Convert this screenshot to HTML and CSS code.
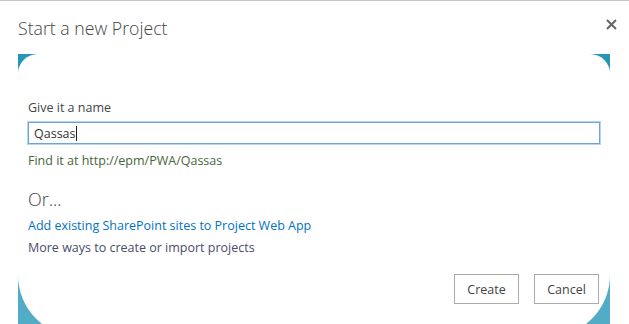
FILE: index.html
```html
<!DOCTYPE html>
<html lang="en">
<head>
    <meta charset="UTF-8">
    <meta name="viewport" content="width=device-width, initial-scale=1.0">
    <title>Start a new Project</title>
    <link rel="stylesheet" href="styles.css">
</head>
<body>
    <div class="dialog">
        <div class="dialog-header">
            <h1 class="dialog-title">Start a new Project</h1>
            <button class="close-button" title="Close">
                <svg width="11" height="11" viewBox="0 0 11 11">
                    <path d="M1 1 L10 10 M10 1 L1 10" stroke="#666" stroke-width="2" fill="none"/>
                </svg>
            </button>
        </div>

        <div class="frame">
            <div class="card">
                <label class="field-label" for="project_name">Give it a name</label>
                <div class="name-box">
                    <span class="name-text">Qassas</span><span class="caret"></span>
                </div>
                <div class="url-hint">Find it at http://epm/PWA/Qassas</div>

                <div class="or-heading">Or...</div>
                <a class="link" href="#">Add existing SharePoint sites to Project Web App</a>
                <a class="link link-more" href="#">More ways to create or import projects</a>

                <div class="buttons">
                    <button class="dialog-button">Create</button>
                    <button class="dialog-button">Cancel</button>
                </div>
            </div>
        </div>
    </div>
</body>
</html>
```
FILE: styles.css
```css
html, body {
    margin: 0;
    background: #fff;
}
body {
    height: 324px;
    box-sizing: border-box;
    overflow: hidden;
    font-family: "Open Sans", Arial, sans-serif;
    color: #444;
    border-top: 1px solid #c6c6c6;
}
.dialog-header {
    display: flex;
    justify-content: space-between;
    align-items: flex-start;
    padding: 0 12px 0 18px;
    height: 53px;
}
.dialog-title {
    margin: 15px 0 0 0;
    font-size: 17.7px;
    font-weight: 300;
    color: #444;
    line-height: 24px;
}
.close-button {
    margin-top: 17px;
    padding: 0;
    border: none;
    background: none;
    width: 11px;
    height: 11px;
    cursor: pointer;
}
/* teal frame that shows through the card's rounded corners */
.frame {
    margin: 0 19px 0 18px;
    height: 270px;
    overflow: hidden;
    background: linear-gradient(to bottom, #2596b8 0, #2596b8 12px, #fff 22px, #fff 214px, #52acc6 223px, #52acc6 100%);
}
.card {
    height: 283px;
    box-sizing: border-box;
    background: #fff;
    border-radius: 20px 20px 62px 62px;
    padding: 45px 10px 0 10px;
    display: flex;
    flex-direction: column;
    font-size: 12.5px;
}
.field-label {
    line-height: 18px;
}
.name-box {
    margin-top: 5px;
    height: 22px;
    box-sizing: border-box;
    border: 1px solid #6ea5d8;
    box-shadow: 0 0 0 1px #b9d4ee;
    padding: 0 5px;
    display: flex;
    align-items: center;
    color: #333;
}
.caret {
    display: inline-block;
    width: 1px;
    height: 15px;
    background: #222;
}
.url-hint {
    margin-top: 8px;
    line-height: 18px;
    color: #46663a;
}
.or-heading {
    margin-top: 17px;
    font-size: 18px;
    font-weight: 300;
    line-height: 24px;
}
.link {
    margin-top: 6px;
    line-height: 18px;
    color: #0072c6;
    text-decoration: none;
}
.link-more {
    margin-top: 4px;
    color: #4b4b6b;
}
.buttons {
    margin-top: 17px;
    display: flex;
    justify-content: flex-end;
    gap: 15px;
    padding-right: 1px;
}
.dialog-button {
    width: 65px;
    height: 30px;
    border: 1px solid #ababab;
    background: #fff;
    color: #444;
    font-family: "Open Sans", Arial, sans-serif;
    font-size: 12.5px;
    cursor: pointer;
}
```
